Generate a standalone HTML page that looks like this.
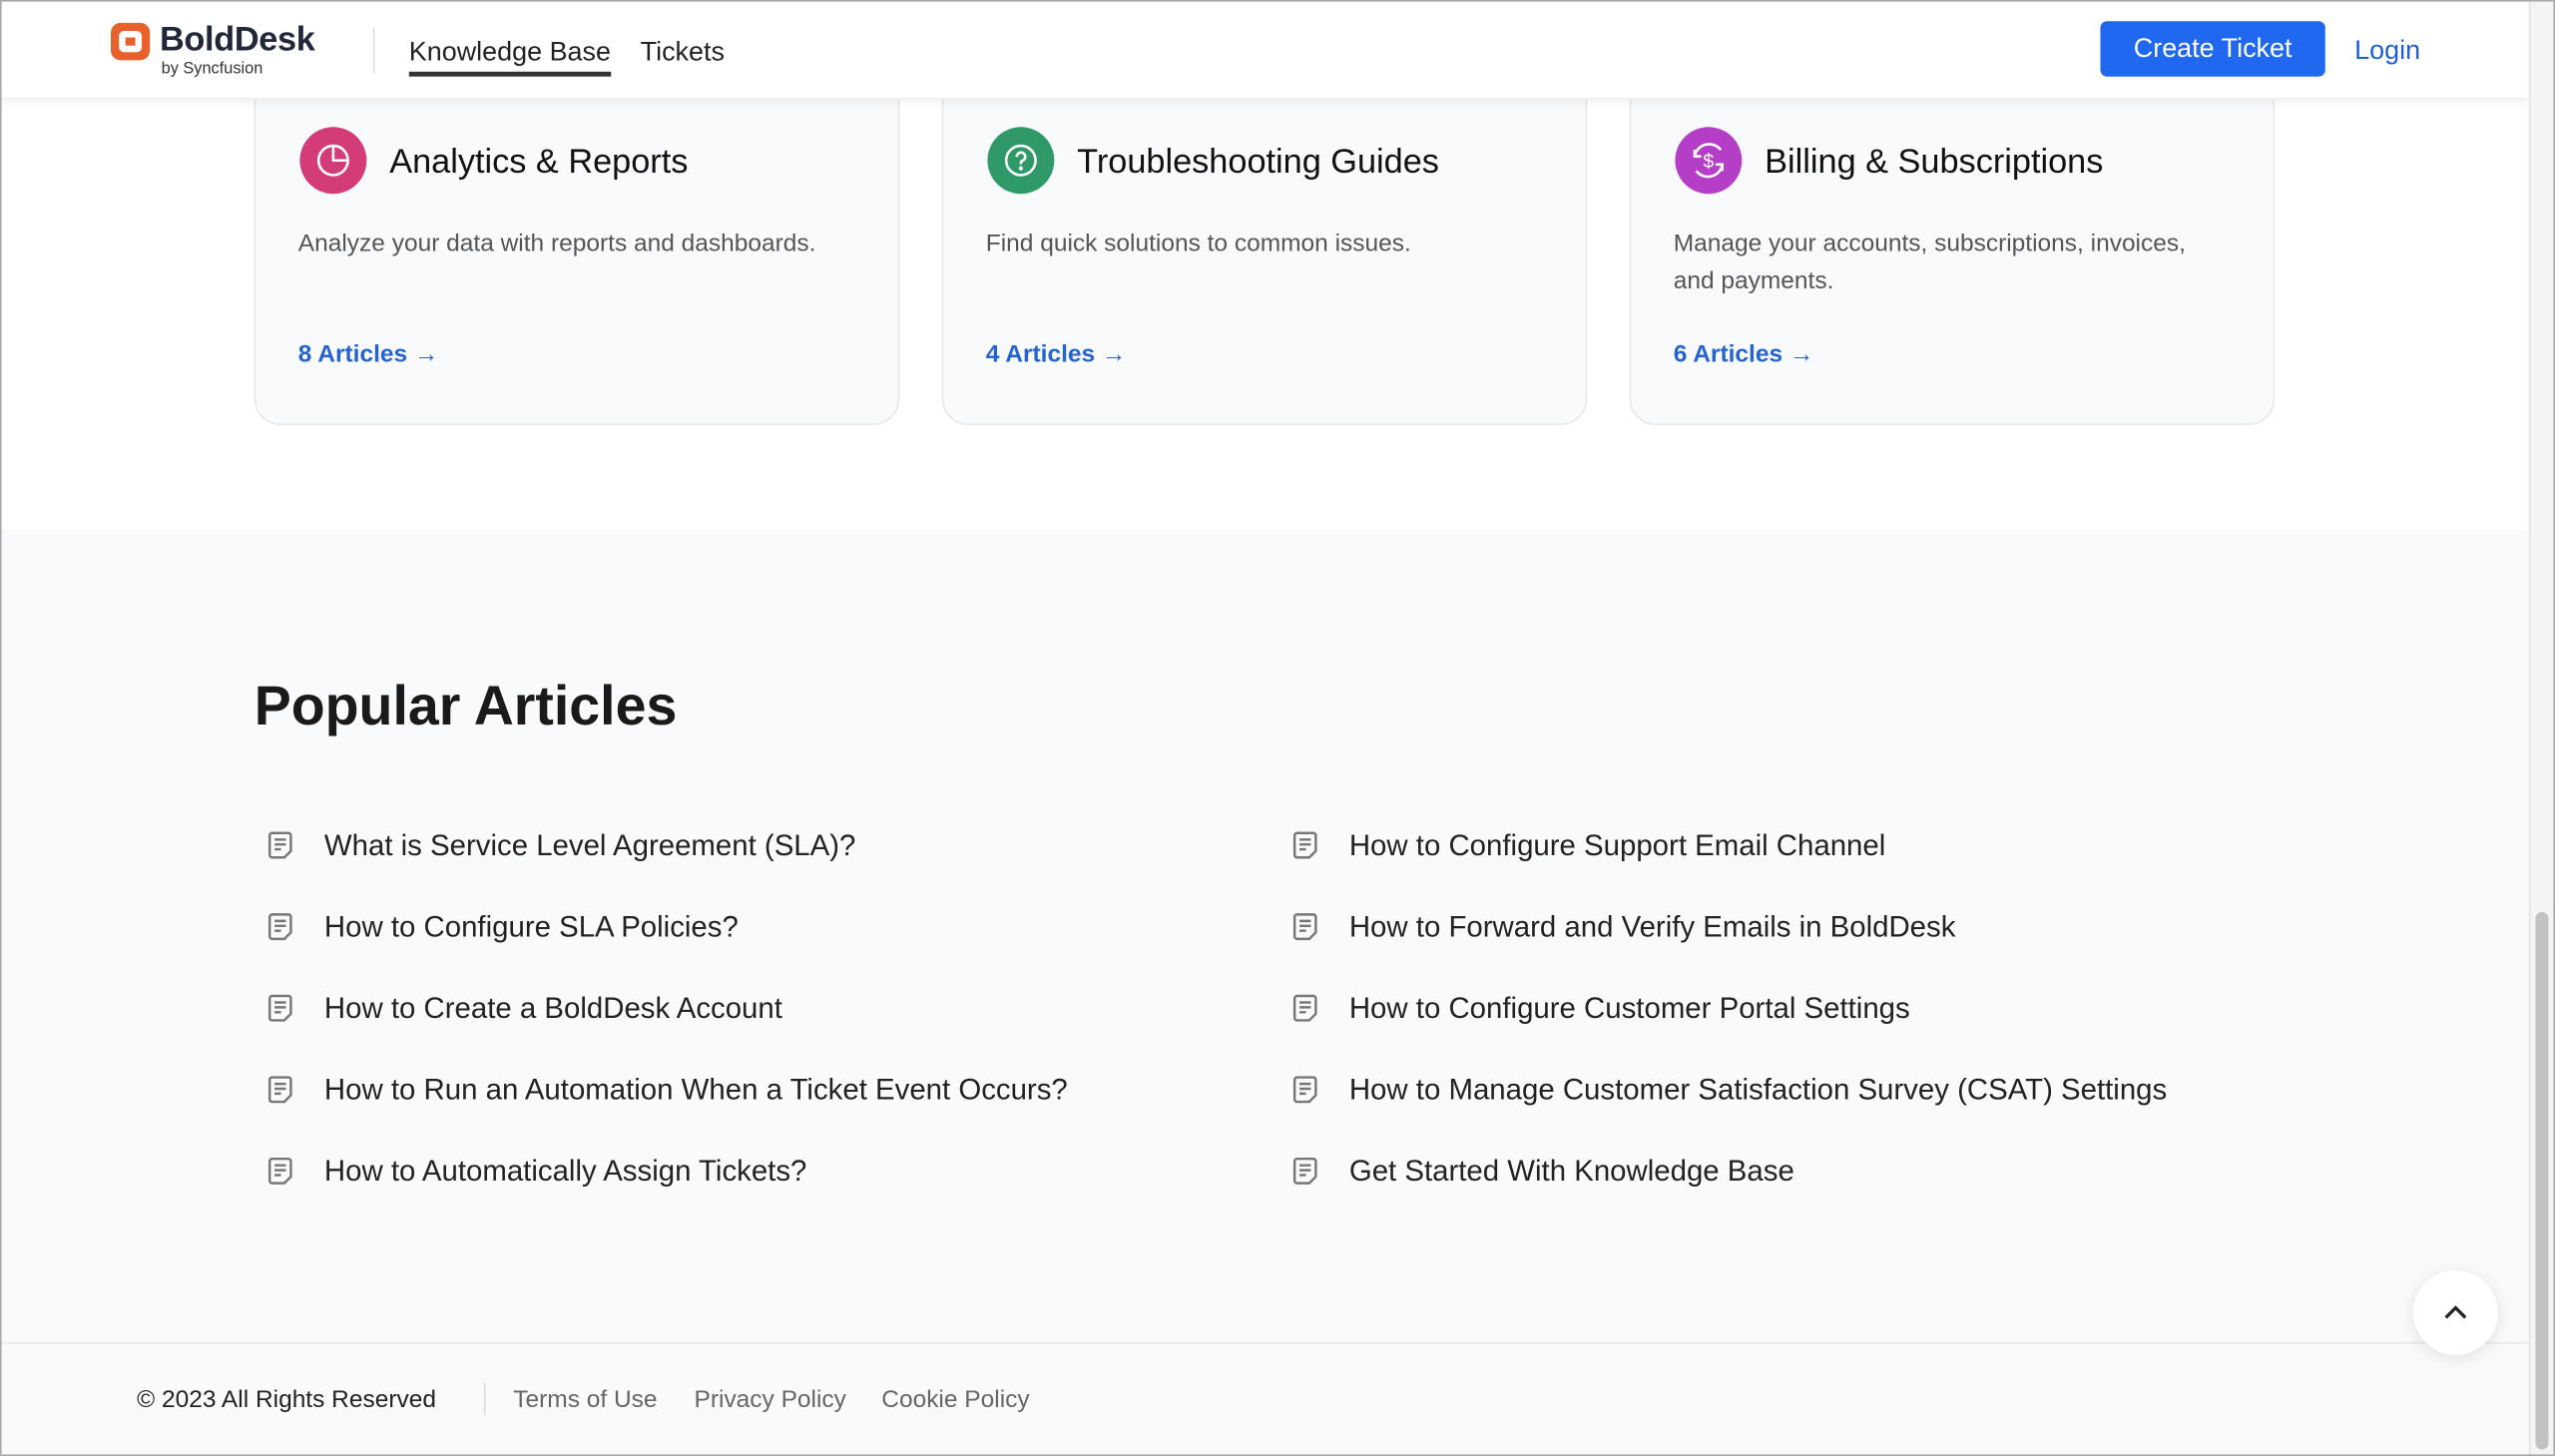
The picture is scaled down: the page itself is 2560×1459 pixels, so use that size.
<!DOCTYPE html>
<html><head><meta charset="utf-8"><style>
*{margin:0;padding:0;box-sizing:border-box}
html,body{width:2560px;height:1459px;overflow:hidden;background:#fff;font-family:"Liberation Sans",sans-serif}
#s{position:absolute;left:0;top:0;width:1568px;height:894px;transform:scale(1.63265,1.632);transform-origin:0 0;background:#fff;overflow:hidden}
.a{position:absolute}
.card{position:absolute;top:20px;width:396px;height:241px;background:#f9fafb;border:1px solid #e6e8eb;border-radius:16px}
.ic{position:absolute;left:27px;top:57px;width:41px;height:41px;border-radius:50%}
.ct{position:absolute;left:82px;top:67px;font-size:21px;color:#111}
.cd{position:absolute;left:26px;top:117px;font-size:15px;line-height:23px;color:#555;width:336px}
.cl{position:absolute;left:26px;top:188px;font-size:15px;font-weight:bold;color:#2563d0}
.art{position:absolute;font-size:18px;color:#222;height:24px;line-height:24px}
.art svg{position:absolute;left:-36px;top:3px}
.fl{position:absolute;top:851px;font-size:15px;color:#666}
</style></head><body><div id="s">
<div class="a" style="left:0;top:325px;width:1552px;height:569px;background:#f9fafb"></div>
<div class="card" style="left:156px"><div class="ic" style="background:#d43b79"><svg width="41" height="41" viewBox="0 0 41 41" fill="none" stroke="#fff" stroke-width="1.6"><circle cx="20.5" cy="20.5" r="9"/><path d="M20.5 11.5v9h9"/></svg></div><div class="ct">Analytics &amp; Reports</div><div class="cd">Analyze your data with reports and dashboards.</div><div class="cl">8 Articles →</div></div>
<div class="card" style="left:578px"><div class="ic" style="background:#2f9a68"><svg width="41" height="41" viewBox="0 0 41 41" fill="none" stroke="#fff" stroke-width="1.6"><circle cx="20.5" cy="20.5" r="9"/><path d="M18 18.3a2.6 2.6 0 1 1 3.4 2.4c-.6.3-.9.8-.9 1.5v.6"/><circle cx="20.5" cy="25.3" r=".5" fill="#fff"/></svg></div><div class="ct">Troubleshooting Guides</div><div class="cd">Find quick solutions to common issues.</div><div class="cl">4 Articles →</div></div>
<div class="card" style="left:1000px"><div class="ic" style="background:#b43fc6"><svg width="41" height="41" viewBox="0 0 41 41" fill="none" stroke="#fff" stroke-width="1.6"><path d="M12 18a9 9 0 0 1 16-4M29 23a9 9 0 0 1-16 4"/><path d="M12 14v4h4M29 27v-4h-4"/><text x="20.5" y="25" font-size="12" fill="#fff" stroke="none" text-anchor="middle" font-family="Liberation Sans">$</text></svg></div><div class="ct">Billing &amp; Subscriptions</div><div class="cd">Manage your accounts, subscriptions, invoices, and payments.</div><div class="cl">6 Articles →</div></div>
<div class="a" style="left:0;top:0;width:1552px;height:61px;background:#fff;box-shadow:0 2px 6px rgba(0,0,0,.06);border-bottom:1px solid #eee"></div>
<div class="a" style="left:68px;top:14px;width:24px;height:23px;background:#e8612c;border-radius:6px"><div class="a" style="left:5px;top:5px;width:14px;height:13px;background:#fff;border-radius:3px"></div><div class="a" style="left:9px;top:9px;width:6px;height:5px;background:#e8612c"></div></div>
<div class="a" style="left:98px;top:13px;font-size:21px;font-weight:bold;color:#22283a;letter-spacing:-.2px">BoldDesk</div>
<div class="a" style="left:99px;top:37px;font-size:10px;color:#333">by Syncfusion</div>
<div class="a" style="left:229px;top:17px;width:1px;height:28px;background:#ddd"></div>
<div class="a" style="left:251px;top:23px;font-size:16.5px;color:#222">Knowledge Base</div>
<div class="a" style="left:251px;top:44px;width:124px;height:3px;background:#333"></div>
<div class="a" style="left:393px;top:23px;font-size:16.5px;color:#222">Tickets</div>
<div class="a" style="left:1289px;top:13px;width:138px;height:34px;background:#2168f0;border-radius:4px;color:#fff;font-size:16.5px;text-align:center;line-height:35px">Create Ticket</div>
<div class="a" style="left:1445px;top:22px;font-size:16.5px;color:#1f5fd0">Login</div>
<div class="a" style="left:156px;top:415px;font-size:34px;font-weight:bold;color:#1a1a1a">Popular Articles</div>
<svg width="0" height="0" style="position:absolute"><defs><symbol id="d" viewBox="0 0 18 18"><g fill="none" stroke="#777" stroke-width="1.5"><path d="M4 1.5h10a1.5 1.5 0 0 1 1.5 1.5v9.5l-4 4H4A1.5 1.5 0 0 1 2.5 15V3A1.5 1.5 0 0 1 4 1.5z"/><path d="M5.5 5.5h7M5.5 8.5h7M5.5 11.5h4"/></g></symbol></defs></svg>
<div class="art" style="left:199px;top:507px"><svg width="18" height="18"><use href="#d"/></svg>What is Service Level Agreement (SLA)?</div>
<div class="art" style="left:199px;top:557px"><svg width="18" height="18"><use href="#d"/></svg>How to Configure SLA Policies?</div>
<div class="art" style="left:199px;top:607px"><svg width="18" height="18"><use href="#d"/></svg>How to Create a BoldDesk Account</div>
<div class="art" style="left:199px;top:657px"><svg width="18" height="18"><use href="#d"/></svg>How to Run an Automation When a Ticket Event Occurs?</div>
<div class="art" style="left:199px;top:707px"><svg width="18" height="18"><use href="#d"/></svg>How to Automatically Assign Tickets?</div>
<div class="art" style="left:828px;top:507px"><svg width="18" height="18"><use href="#d"/></svg>How to Configure Support Email Channel</div>
<div class="art" style="left:828px;top:557px"><svg width="18" height="18"><use href="#d"/></svg>How to Forward and Verify Emails in BoldDesk</div>
<div class="art" style="left:828px;top:607px"><svg width="18" height="18"><use href="#d"/></svg>How to Configure Customer Portal Settings</div>
<div class="art" style="left:828px;top:657px"><svg width="18" height="18"><use href="#d"/></svg>How to Manage Customer Satisfaction Survey (CSAT) Settings</div>
<div class="art" style="left:828px;top:707px"><svg width="18" height="18"><use href="#d"/></svg>Get Started With Knowledge Base</div>
<div class="a" style="left:0;top:824px;width:1552px;height:1px;background:#e5e7eb"></div>
<div class="a" style="left:1481px;top:780px;width:52px;height:52px;border-radius:50%;background:#fff;box-shadow:0 2px 10px rgba(0,0,0,.1)"><svg width="52" height="52" viewBox="0 0 52 52" fill="none" stroke="#222" stroke-width="2"><path d="M20 29l6-6 6 6"/></svg></div>
<div class="fl" style="left:84px;color:#222">© 2023 All Rights Reserved</div>
<div class="a" style="left:297px;top:849px;width:1px;height:20px;background:#ddd"></div>
<div class="fl" style="left:315px">Terms of Use</div>
<div class="fl" style="left:426px">Privacy Policy</div>
<div class="fl" style="left:541px">Cookie Policy</div>
<div class="a" style="left:1552px;top:0;width:16px;height:894px;background:#f4f4f4;border-left:1px solid #e2e2e2"><div class="a" style="left:3px;top:560px;width:8px;height:330px;background:#c2c2c2;border-radius:4px"></div></div>
<div class="a" style="left:0;top:0;width:1568px;height:894px;border:1px solid #aaa;pointer-events:none"></div>
</div></body></html>
